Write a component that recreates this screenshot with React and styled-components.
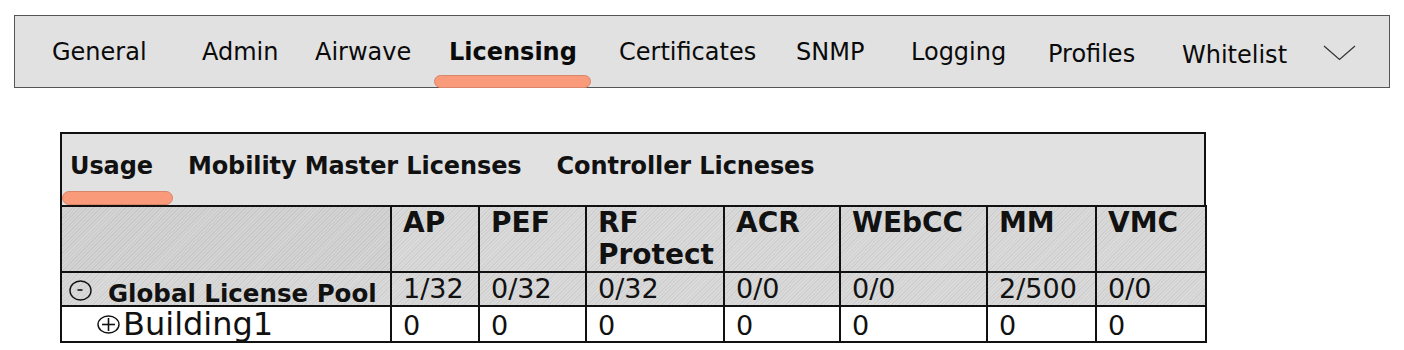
import React from 'react';
import styled, { createGlobalStyle } from 'styled-components';

const TABS = [
    { label: 'General', w: 150 },
    { label: 'Admin', w: 113 },
    { label: 'Airwave', w: 134 },
    { label: 'Licensing', w: 170, active: true },
    { label: 'Certificates', w: 177 },
    { label: 'SNMP', w: 115 },
    { label: 'Logging', w: 137 },
    { label: 'Profiles', w: 134, dy: 2 },
    { label: 'Whitelist', w: 141, dy: 3 },
];

const SUB_TABS = ['Usage', 'Mobility Master Licenses', 'Controller Licneses'];

const COLUMNS = [
    { label: 'AP', w: 88 },
    { label: 'PEF', w: 107 },
    { label: 'RF Protect', w: 138 },
    { label: 'ACR', w: 116 },
    { label: 'WEbCC', w: 147 },
    { label: 'MM', w: 109 },
    { label: 'VMC', w: 110 },
];

const ROWS = [
    { name: 'Global License Pool', pool: true, values: ['1/32', '0/32', '0/32', '0/0', '0/0', '2/500', '0/0'] },
    { name: 'Building1', pool: false, values: ['0', '0', '0', '0', '0', '0', '0'] },
];

const GlobalStyle = createGlobalStyle`
    body {
        margin: 0;
        background: #fff;
        font-family: 'DejaVu Sans', 'Liberation Sans', sans-serif;
        color: #111;
    }
`;

const ToggleIcon = ({ open }) => (
    <Toggle $mb={open ? 4 : 7} $h={open ? 21 : 19} viewBox={open ? '0 0 23 21' : '0 0 23 19'}>
        {open ? (
            <>
                <ellipse cx="11.5" cy="10.5" rx="10.5" ry="9.5" fill="none" stroke="#111" strokeWidth="1.4" />
                <line x1="8.5" y1="10" x2="13.5" y2="10" stroke="#111" strokeWidth="1.6" />
            </>
        ) : (
            <>
                <ellipse cx="11.5" cy="9.5" rx="10.5" ry="8.5" fill="#fff" stroke="#111" strokeWidth="1.4" />
                <line x1="5" y1="9.5" x2="18" y2="9.5" stroke="#111" strokeWidth="1.6" />
                <line x1="11.5" y1="3" x2="11.5" y2="16" stroke="#111" strokeWidth="1.6" />
            </>
        )}
    </Toggle>
);

const App = () => {
    return (
        <Page>
            <GlobalStyle />
            <TopBar $cols={TABS.map((t) => `${t.w}px`).join(' ') + ' 40px'}>
                {TABS.map((tab) => (
                    <Tab key={tab.label} $active={tab.active} $dy={tab.dy || 0}>
                        {tab.label}
                    </Tab>
                ))}
                <More>
                    <svg width="33" height="16" viewBox="0 0 33 16">
                        <polyline points="1,1 16.5,14.5 32,1" fill="none" stroke="#333" strokeWidth="1.2" />
                    </svg>
                </More>
            </TopBar>

            <Panel>
                <SubTabs>
                    {SUB_TABS.map((label, i) => (
                        <SubTab key={label} $active={i === 0}>
                            {label}
                        </SubTab>
                    ))}
                </SubTabs>
                <Table>
                    <colgroup>
                        <col style={{ width: 330 }} />
                        {COLUMNS.map((c) => (
                            <col key={c.label} style={{ width: c.w }} />
                        ))}
                    </colgroup>
                    <thead>
                        <tr>
                            <HeadCell $blank />
                            {COLUMNS.map((c) => (
                                <HeadCell key={c.label}>{c.label}</HeadCell>
                            ))}
                        </tr>
                    </thead>
                    <tbody>
                        {ROWS.map((row) => (
                            <Row key={row.name} $pool={row.pool}>
                                <NameCell $pool={row.pool}>
                                    <Name $pool={row.pool}>
                                        <ToggleIcon open={row.pool} />
                                        <span>{row.name}</span>
                                    </Name>
                                </NameCell>
                                {row.values.map((v, i) => (
                                    <Cell key={i} $pool={row.pool}>
                                        {v}
                                    </Cell>
                                ))}
                            </Row>
                        ))}
                    </tbody>
                </Table>
            </Panel>
        </Page>
    );
};

export default App;

const hatch = `repeating-linear-gradient(135deg, #cfcfcf 0 1px, #dadada 1px 2.5px)`;

const Page = styled.div`
    padding: 15px 14px 0 14px;
`;

const TopBar = styled.nav`
    box-sizing: border-box;
    height: 73px;
    border: 1px solid #555;
    background: #e1e1e1;
    display: grid;
    grid-template-columns: ${(p) => p.$cols};
    align-items: start;
    padding: 22px 0 0 37px;
`;

const Tab = styled.div`
    position: relative;
    padding-top: ${(p) => p.$dy}px;
    font-size: 24px;
    line-height: 28px;
    font-weight: ${(p) => (p.$active ? 700 : 400)};
    color: #0a0a0a;
    white-space: nowrap;

    &::after {
        content: '';
        display: ${(p) => (p.$active ? 'block' : 'none')};
        position: absolute;
        left: -15px;
        top: 37px;
        width: 157px;
        height: 13px;
        box-sizing: border-box;
        background: #f99a7b;
        border: 1px solid #d9866b;
        border-radius: 7px;
    }
`;

const More = styled.div`
    padding-top: 7px;
    line-height: 0;
`;

const Panel = styled.section`
    width: 1146px;
    margin: 44px 0 0 46px;
`;

const SubTabs = styled.div`
    box-sizing: border-box;
    height: 73px;
    border: 2px solid #111;
    border-bottom: 0;
    background: #e1e1e1;
    display: flex;
    gap: 35px;
    align-items: flex-start;
    padding: 18px 0 0 8px;
`;

const SubTab = styled.div`
    position: relative;
    font-size: 24px;
    line-height: 28px;
    font-weight: 700;
    white-space: nowrap;
    letter-spacing: -0.1px;

    &::after {
        content: '';
        display: ${(p) => (p.$active ? 'block' : 'none')};
        position: absolute;
        left: -8px;
        top: 39px;
        width: 111px;
        height: 14px;
        box-sizing: border-box;
        background: #f99a7b;
        border: 1px solid #d9866b;
        border-radius: 7px;
    }
`;

const Table = styled.table`
    width: 1146px;
    table-layout: fixed;
    border-collapse: collapse;
`;

const HeadCell = styled.th`
    border: 2px solid #111;
    height: 64px;
    padding: 0 0 0 11px;
    vertical-align: top;
    text-align: left;
    font-size: 28px;
    line-height: 32px;
    font-weight: 700;
    background: ${(p) => (p.$blank ? 'repeating-linear-gradient(135deg, #c8c8c8 0 1px, #d4d4d4 1px 2.5px)' : hatch)};
`;

const Row = styled.tr`
    background: ${(p) => (p.$pool ? hatch : '#fff')};
`;

const Cell = styled.td`
    border: 2px solid #111;
    padding: ${(p) => (p.$pool ? '0 0 0 11px' : '3px 0 0 11px')};
    vertical-align: top;
    font-size: 27px;
    line-height: ${(p) => (p.$pool ? 32 : 31)}px;
    white-space: nowrap;
`;

const NameCell = styled.td`
    border: 2px solid #111;
    padding: ${(p) => (p.$pool ? '0 0 0 7px' : '0 0 0 35px')};
    vertical-align: bottom;
`;

const Name = styled.div`
    display: flex;
    align-items: flex-end;
    gap: ${(p) => (p.$pool ? 16 : 3)}px;
    font-size: ${(p) => (p.$pool ? 24.5 : 32)}px;
    line-height: ${(p) => (p.$pool ? 22 : 34)}px;
    font-weight: ${(p) => (p.$pool ? 700 : 400)};
    white-space: nowrap;
`;

const Toggle = styled.svg`
    flex: none;
    display: block;
    width: 23px;
    height: ${(p) => p.$h}px;
    margin-bottom: ${(p) => p.$mb}px;
`;
